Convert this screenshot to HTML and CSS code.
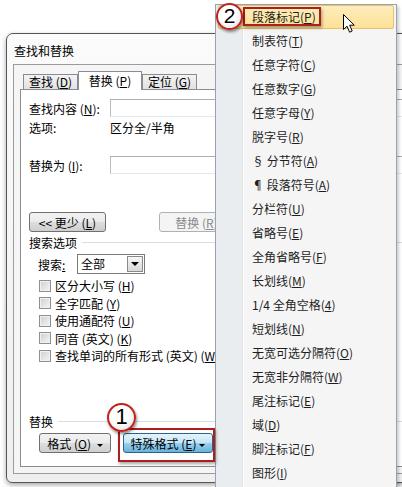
FILE: index.html
```html
<!DOCTYPE html>
<html lang="zh-CN">
<head>
  <meta charset="UTF-8">
  <title>查找和替换</title>
  <link rel="stylesheet" href="styles.css">
</head>
<body>
  <div class="dialog">
    <div class="dlg-title">查找和替换</div>
    <div class="dlg-client">
      <div class="tabs">
        <div class="tab">查找 (<u>D</u>)</div>
        <div class="tab active">替换 (<u>P</u>)</div>
        <div class="tab">定位 (<u>G</u>)</div>
      </div>

      <div class="tab-panel">
        <div class="field-row">
          <span class="field-label">查找内容 (<u>N</u>):</span>
          <span class="text-box"></span>
        </div>
        <div class="field-row option-row">
          <span class="field-label">选项:</span>
          <span>区分全/半角</span>
        </div>
        <div class="field-row replace-row">
          <span class="field-label">替换为 (<u>I</u>):</span>
          <span class="text-box"></span>
        </div>

        <div class="button-row">
          <button class="btn btn-less">&lt;&lt; 更少 (<u>L</u>)</button>
          <button class="btn btn-disabled btn-replace">替换 (<u>R</u>)</button>
        </div>

        <div class="group-head">
          <span>搜索选项</span>
          <span class="group-line"></span>
        </div>

        <div class="search-row">
          <span class="search-label">搜索<u>:</u></span>
          <span class="combo">
            <span class="combo-text">全部</span>
            <span class="combo-arrow"></span>
          </span>
        </div>

        <div class="check-list">
          <div class="check-row"><span class="check-box"></span>区分大小写 (<u>H</u>)</div>
          <div class="check-row"><span class="check-box"></span>全字匹配 (<u>Y</u>)</div>
          <div class="check-row"><span class="check-box"></span>使用通配符 (<u>U</u>)</div>
          <div class="check-row"><span class="check-box"></span>同音 (英文) (<u>K</u>)</div>
          <div class="check-row"><span class="check-box"></span>查找单词的所有形式 (英文) (<u>W</u>)</div>
        </div>

        <div class="group-head group-replace">
          <span>替换</span>
          <span class="group-line"></span>
        </div>

        <div class="format-row">
          <button class="btn btn-format">格式 (<u>O</u>) <span class="caret"></span></button>
          <button class="btn btn-pressed">特殊格式 (<u>E</u>)<span class="caret"></span></button>
        </div>
      </div>
    </div>
  </div>

  <!-- 下拉菜单 -->
  <div class="menu">
    <div class="menu-item hover">段落标记(<u>P</u>)</div>
    <div class="menu-item">制表符(<u>T</u>)</div>
    <div class="menu-item">任意字符(<u>C</u>)</div>
    <div class="menu-item">任意数字(<u>G</u>)</div>
    <div class="menu-item">任意字母(<u>Y</u>)</div>
    <div class="menu-item">脱字号(<u>R</u>)</div>
    <div class="menu-item">§ 分节符(<u>A</u>)</div>
    <div class="menu-item">¶ 段落符号(<u>A</u>)</div>
    <div class="menu-item">分栏符(<u>U</u>)</div>
    <div class="menu-item">省略号(<u>E</u>)</div>
    <div class="menu-item">全角省略号(<u>F</u>)</div>
    <div class="menu-item">长划线(<u>M</u>)</div>
    <div class="menu-item">1/4 全角空格(<u>4</u>)</div>
    <div class="menu-item">短划线(<u>N</u>)</div>
    <div class="menu-item">无宽可选分隔符(<u>O</u>)</div>
    <div class="menu-item">无宽非分隔符(<u>W</u>)</div>
    <div class="menu-item">尾注标记(<u>E</u>)</div>
    <div class="menu-item">域(<u>D</u>)</div>
    <div class="menu-item">脚注标记(<u>F</u>)</div>
    <div class="menu-item">图形(<u>I</u>)</div>
  </div>

  <!-- 标注 -->
  <div class="mark mark-btn"></div>
  <div class="badge badge-1">1</div>
  <div class="mark mark-item"></div>
  <div class="badge badge-2">2</div>

  <svg class="cursor" width="14" height="21" viewBox="0 0 14 21">
    <path d="M1.5 1.5 L1.5 16.5 L5 13.2 L7.6 19.2 L10.2 18 L7.7 12.2 L12.3 12.2 Z" fill="#fff" stroke="#000" stroke-width="1" stroke-linejoin="round"/>
  </svg>
</body>
</html>
```

FILE: styles.css
```css
* {
  margin: 0;
  padding: 0;
  box-sizing: border-box;
}

body {
  width: 402px;
  height: 487px;
  overflow: hidden;
  background: #fff;
  font-family: "Noto Sans CJK SC", "Noto Sans", sans-serif;
  font-size: 12px;
  color: #000;
  position: relative;
}

u {
  text-decoration: underline;
  text-underline-offset: 1px;
}

/* 对话框 */
.dialog {
  margin: 33px 0 0 6px;
  width: 470px;
  border: 1px solid #555;
  border-radius: 7px 7px 6px 6px;
  background: linear-gradient(#fbfbfb, #efefef);
  padding: 0 0 8px 6px;
  box-shadow: 0 2px 5px rgba(0,0,0,0.35);
}

.dlg-title {
  height: 30px;
  padding: 10px 0 0 1px;
  line-height: 14px;
}

.dlg-client {
  height: 410px;
  border: 1px solid #9c9c9c;
  border-right: none;
  background: #f5f5f5;
  padding: 6px 0 0 6px;
}

.tabs {
  display: flex;
  height: 18px;
  padding-left: 3px;
}

.tab {
  width: 55px;
  height: 15px;
  margin-top: 3px;
  border: 1px solid #898c95;
  border-bottom: none;
  background: linear-gradient(#f3f3f3, #e2e2e2);
  text-align: center;
  line-height: 14px;
}

.tab.active {
  width: 64px;
  height: 19px;
  margin-top: 0;
  margin-bottom: -1px;
  background: #fff;
  position: relative;
  z-index: 1;
  line-height: 18px;
}

.tab-panel {
  height: 378px;
  border: 1px solid #898c95;
  border-right: none;
  background: #fff;
  padding: 9px 0 0 8px;
}

.field-row {
  display: flex;
  align-items: center;
  height: 18px;
}

.field-label {
  width: 81px;
  flex-shrink: 0;
}

.text-box {
  flex: 1;
  height: 18px;
  border: 1px solid #abadb3;
  border-color: #abadb3 #dbdfe6 #e3e9ef #b8bbc2;
}

.option-row {
  margin-top: 2px;
  height: 16px;
}

.replace-row {
  margin-top: 21px;
}

.button-row {
  display: flex;
  height: 20px;
  margin-top: 38px;
}

.btn {
  height: 20px;
  border: 1px solid #707070;
  border-radius: 3px;
  background: linear-gradient(#f2f2f2 0%, #ebebeb 48%, #dddddd 52%, #cfcfcf 100%);
  font-family: inherit;
  font-size: 12px;
  color: #000;
  line-height: 17px;
  white-space: nowrap;
}

.btn-less {
  width: 77px;
}

.btn-replace {
  width: 75px;
  margin-left: 53px;
}

.btn-disabled {
  border-color: #adb2b5;
  background: #f4f4f4;
  color: #8a8a8a;
}

.group-head {
  display: flex;
  align-items: center;
  height: 14px;
  margin-top: 3px;
}

.group-line {
  flex: 1;
  margin-left: 5px;
  border-top: 1px solid #d5dfe5;
}

.search-row {
  display: flex;
  align-items: center;
  height: 20px;
  margin-top: 5px;
  padding-left: 9px;
}

.search-label {
  width: 39px;
}

.combo {
  display: flex;
  width: 68px;
  height: 20px;
  border: 1px solid #7a7a7a;
  background: #fff;
  padding: 1px;
}

.combo-text {
  flex: 1;
  line-height: 16px;
  padding-left: 2px;
}

.combo-arrow {
  width: 16px;
  border: 1px solid #8a8a8a;
  background: linear-gradient(#f6f6f6, #d9d9d9);
  display: flex;
  justify-content: center;
  align-items: center;
}

.combo-arrow::after {
  content: "";
  border-left: 4px solid transparent;
  border-right: 4px solid transparent;
  border-top: 4px solid #000;
}

.check-list {
  margin-top: 3px;
  padding-left: 10px;
}

.check-row {
  display: flex;
  align-items: center;
  height: 17.5px;
  white-space: nowrap;
}

.check-box {
  width: 12px;
  height: 12px;
  margin-right: 4px;
  border: 1px solid #8e8f8f;
  background: linear-gradient(135deg, #cfcfcf, #f4f4f4);
  box-shadow: inset 0 0 0 1px #f0f0f0;
}

.group-replace {
  margin-top: 49.5px;
}

.format-row {
  display: flex;
  height: 20px;
  margin-top: 5px;
  padding-left: 10px;
}

.btn-format {
  width: 72px;
}

.btn-pressed {
  width: 90px;
  margin-left: 12px;
  border-color: #2c628b;
  background: linear-gradient(#e5f4fc 0%, #c4e5f6 48%, #98d1ef 52%, #68b3db 100%);
}

.caret {
  display: inline-block;
  margin-left: 3px;
  vertical-align: middle;
  border-left: 3px solid transparent;
  border-right: 3px solid transparent;
  border-top: 3px solid #000;
}

/* 菜单 */
.menu {
  position: absolute;
  left: 215px;
  top: 4px;
  width: 182px;
  height: 490px;
  border: 1px solid #97a3b1;
  background: linear-gradient(to right, #e9edef 0, #e9edef 26px, #e2e3e3 26px, #e2e3e3 27px, #fff 27px, #fff 28px, #f5f5f5 28px);
  box-shadow: 2px 2px 3px rgba(0,0,0,0.2);
  font-family: "Noto Sans CJK SC", "Noto Sans", sans-serif;
  color: #1e1e1e;
}

.menu-item {
  height: 24px;
  line-height: 24px;
  padding-left: 36px;
  white-space: nowrap;
}

.menu-item.hover {
  margin: 0 2px;
  padding-left: 33px;
  line-height: 22px;
  border: 1px solid #e5c36e;
  border-radius: 2px;
  background: linear-gradient(#fdedbb, #fde197);
}

/* 标注 */
.mark {
  position: absolute;
  border: 2px solid #ac1f1c;
  box-shadow: 1px 2px 3px rgba(0,0,0,0.35);
}

.mark-btn {
  left: 118px;
  top: 428px;
  width: 97px;
  height: 34px;
}

.mark-item {
  left: 243px;
  top: 7px;
  width: 78px;
  height: 19px;
}

.badge {
  position: absolute;
  border: 2.5px solid #c3221d;
  border-radius: 50%;
  background: radial-gradient(circle at 40% 35%, #fff 45%, #d8d8d8 100%);
  box-shadow: 1px 2px 3px rgba(0,0,0,0.45);
  font-family: "Liberation Sans", Arial, sans-serif;
  color: #000;
  text-align: center;
}

.badge-1 {
  left: 107px;
  top: 403px;
  width: 29px;
  height: 29px;
  font-size: 22px;
  line-height: 24px;
}

.badge-2 {
  left: 216px;
  top: 3px;
  width: 27px;
  height: 27px;
  font-size: 21px;
  line-height: 22px;
}

.cursor {
  position: absolute;
  left: 342px;
  top: 13px;
}
```
